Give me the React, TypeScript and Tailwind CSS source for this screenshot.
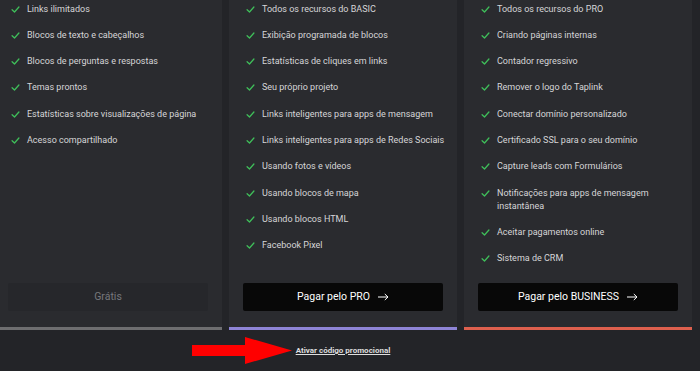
const basic = [
  'Links ilimitados',
  'Blocos de texto e cabeçalhos',
  'Blocos de perguntas e respostas',
  'Temas prontos',
  'Estatísticas sobre visualizações de página',
  'Acesso compartilhado',
];

const pro = [
  'Todos os recursos do BASIC',
  'Exibição programada de blocos',
  'Estatísticas de cliques em links',
  'Seu próprio projeto',
  'Links inteligentes para apps de mensagem',
  'Links inteligentes para apps de Redes Sociais',
  'Usando fotos e vídeos',
  'Usando blocos de mapa',
  'Usando blocos HTML',
  'Facebook Pixel',
];

const business = [
  'Todos os recursos do PRO',
  'Criando páginas internas',
  'Contador regressivo',
  'Remover o logo do Taplink',
  'Conectar domínio personalizado',
  'Certificado SSL para o seu domínio',
  'Capture leads com Formulários',
  'Notificações para apps de mensagem instantânea',
  'Aceitar pagamentos online',
  'Sistema de CRM',
];

function Check() {
  return (
    <svg width="9" height="9" viewBox="0 0 10 10" className="shrink-0 mt-[2px]">
      <path d="M1.2 5.2 L3.9 7.8 L8.8 2.2" fill="none" stroke="#3fbf5a" strokeWidth="1.4" strokeLinecap="round" strokeLinejoin="round" />
    </svg>
  );
}

function Card({ items, accent, children }: { items: string[]; accent: string; children: React.ReactNode }) {
  return (
    <div className={`w-[228px] h-[330px] shrink-0 bg-[#2a2b2f] flex flex-col border-b-[3px] ${accent}`}>
      <ul className="flex flex-col gap-[13.3px] pt-[2.5px] pl-[17px] pr-[12px] flex-1">
        {items.map((t) => (
          <li key={t} className="flex gap-[7px] text-[9px] leading-[13px] text-[#d6d6d8]">
            <Check />
            <span className="max-w-[185px]">{t}</span>
          </li>
        ))}
      </ul>
      <div className="px-[14px] pb-[16px]">{children}</div>
    </div>
  );
}

function Arrow() {
  return (
    <svg width="11" height="8" viewBox="0 0 11 8" className="ml-[8px]">
      <path d="M0 4 H10 M6.8 1 L10 4 L6.8 7" fill="none" stroke="#fff" strokeWidth="1" />
    </svg>
  );
}

export default function App() {
  return (
    <div className="w-[700px] h-[371px] overflow-hidden bg-[#232428] relative" style={{ fontFamily: 'Roboto, "Noto Sans", sans-serif' }}>
      <div className="ml-[-6px] w-[698px]">
        <div className="flex gap-[7px]">
          <Card items={basic} accent="border-[#6e6e70]">
            <div className="h-[28px] rounded-[2px] bg-[#26272b] flex items-center justify-center text-[10.5px] text-[#77787c]">
              Grátis
            </div>
          </Card>
          <Card items={pro} accent="border-[#8e84d6]">
            <div className="h-[28px] rounded-[2px] bg-[#080808] flex items-center justify-center text-[10.5px] text-white">
              Pagar pelo PRO
              <Arrow />
            </div>
          </Card>
          <Card items={business} accent="border-[#de604e]">
            <div className="h-[28px] rounded-[2px] bg-[#080808] flex items-center justify-center text-[10.5px] text-white">
              Pagar pelo BUSINESS
              <Arrow />
            </div>
          </Card>
        </div>
        <div className="flex justify-center pt-[15px] w-[698px]">
          <a className="text-[8px] font-bold text-[#dedede] underline underline-offset-[1px]">Ativar código promocional</a>
        </div>
      </div>
      <svg className="absolute left-[192px] top-[337px]" width="101" height="27" viewBox="0 0 101 27">
        <polygon points="0,8 53,8 53,0 100,13.5 53,27 53,19 0,19" fill="#ff0000" />
      </svg>
    </div>
  );
}
